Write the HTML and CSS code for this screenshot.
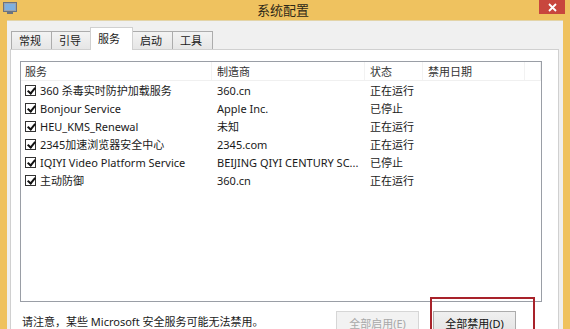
FILE: index.html
```html
<!DOCTYPE html>
<html lang="zh-CN">
  <head>
    <meta charset="UTF-8" />
    <title>系统配置</title>
    <link rel="stylesheet" href="styles.css">
  </head>
  <body>
    <div class="window">
      <div class="titlebar">
        <svg class="app-icon" width="14" height="12" viewBox="0 0 14 12">
          <rect x="0.5" y="0.5" width="13" height="9" fill="#9aa3ae" stroke="#6b7380" />
          <rect x="2" y="2" width="10" height="6" fill="#7fb0e0" />
          <rect x="4" y="10" width="6" height="2" fill="#6b7380" />
        </svg>
        <div class="title">系统配置</div>
        <button class="close-btn">
          <svg width="9" height="9" viewBox="0 0 9 9">
            <path d="M1 1 L8 8 M8 1 L1 8" stroke="#fff" stroke-width="1.8" />
          </svg>
        </button>
      </div>

      <div class="client">
        <div class="tabs">
          <div class="tab">常规</div>
          <div class="tab">引导</div>
          <div class="tab active">服务</div>
          <div class="tab">启动</div>
          <div class="tab">工具</div>
        </div>

        <div class="tab-page">
          <div class="listbox">
            <div class="list-row list-head">
              <div class="cell">服务</div>
              <div class="cell">制造商</div>
              <div class="cell">状态</div>
              <div class="cell">禁用日期</div>
              <div class="cell"></div>
            </div>

            <div class="list-row">
              <div class="cell"><span class="check"></span>360 杀毒实时防护加载服务</div>
              <div class="cell">360.cn</div>
              <div class="cell">正在运行</div>
              <div class="cell"></div>
              <div class="cell"></div>
            </div>
            <div class="list-row">
              <div class="cell"><span class="check"></span>Bonjour Service</div>
              <div class="cell">Apple Inc.</div>
              <div class="cell">已停止</div>
              <div class="cell"></div>
              <div class="cell"></div>
            </div>
            <div class="list-row">
              <div class="cell"><span class="check"></span>HEU_KMS_Renewal</div>
              <div class="cell">未知</div>
              <div class="cell">正在运行</div>
              <div class="cell"></div>
              <div class="cell"></div>
            </div>
            <div class="list-row">
              <div class="cell"><span class="check"></span>2345加速浏览器安全中心</div>
              <div class="cell">2345.com</div>
              <div class="cell">正在运行</div>
              <div class="cell"></div>
              <div class="cell"></div>
            </div>
            <div class="list-row">
              <div class="cell"><span class="check"></span>IQIYI Video Platform Service</div>
              <div class="cell">BEIJING QIYI CENTURY SC...</div>
              <div class="cell">已停止</div>
              <div class="cell"></div>
              <div class="cell"></div>
            </div>
            <div class="list-row">
              <div class="cell"><span class="check"></span>主动防御</div>
              <div class="cell">360.cn</div>
              <div class="cell">正在运行</div>
              <div class="cell"></div>
              <div class="cell"></div>
            </div>
          </div>

          <div class="footer">
            <p class="note">请注意，某些 Microsoft 安全服务可能无法禁用。</p>
            <div class="buttons">
              <button class="btn" disabled>全部启用(E)</button>
              <button class="btn">全部禁用(D)</button>
              <div class="highlight"></div>
            </div>
          </div>
        </div>
      </div>
    </div>
  </body>
</html>
```

FILE: styles.css
```css
:root {
  --frame-color: #efc25f;
  --client-bg: #f0f0f0;
  --border-gray: #acacac;
  --text-color: #1a1a1a;
  --font-family: "Noto Sans", "Noto Sans CJK SC", sans-serif;
}
* {
  box-sizing: border-box;
  margin: 0;
  padding: 0;
}
html,
body {
  width: 570px;
  height: 329px;
  overflow: hidden;
}
body {
  font-family: var(--font-family);
  font-size: 11px;
  color: var(--text-color);
  background: var(--frame-color);
}
.window {
  display: flex;
  flex-direction: column;
  height: 100%;
}
.titlebar {
  height: 22px;
  display: flex;
  align-items: flex-start;
  padding: 0 5px 0 3px;
}
.app-icon {
  margin-top: 2px;
  flex: none;
}
.title {
  flex: 1;
  text-align: center;
  font-family: "Noto Sans CJK SC", sans-serif;
  font-size: 13px;
  line-height: 20px;
  color: #2e2818;
  padding-left: 10px;
}
.close-btn {
  flex: none;
  width: 26px;
  height: 14px;
  border: none;
  background: #c8463d;
  display: flex;
  align-items: center;
  justify-content: center;
}
.client {
  flex: 1;
  margin: 0 7px;
  background: var(--client-bg);
  display: flex;
  flex-direction: column;
  border-top: 1px solid #e3d4a8;
}
.tabs {
  display: flex;
  align-items: flex-end;
  padding: 5px 0 0 4px;
  height: 28px;
  position: relative;
  z-index: 1;
}
.tab {
  height: 18px;
  padding: 0 10px 0 7px;
  line-height: 17px;
  font-family: "Noto Sans CJK SC", sans-serif;
  background: linear-gradient(#f3f3f3, #e6e6e6);
  border: 1px solid var(--border-gray);
  border-bottom: none;
  margin-right: -1px;
}
.tab.active {
  height: 23px;
  margin: 0 -1px -1px -1px;
  padding: 2px 12px 0 7px;
  background: #fff;
  border-color: #d0d0d0;
  position: relative;
}
.tab-page {
  flex: 1;
  margin: 0 4px 0 3px;
  background: #fff;
  border: 1px solid #d0d0d0;
  border-bottom: none;
  padding: 11px 16px 0 9px;
}
.listbox {
  height: 241px;
  border: 1px solid #9a9ea6;
  background: #fff;
}
.list-row {
  display: grid;
  grid-template-columns: 191px 153px 58px 102px 1fr;
  height: 18px;
  align-items: center;
  white-space: nowrap;
}
.list-head {
  height: 19px;
  border-bottom: 1px solid #f0f0f0;
  font-family: "Noto Sans CJK SC", sans-serif;
  color: #333;
}
.list-head .cell {
  height: 100%;
  line-height: 18px;
  border-right: 1px solid #f2f2f2;
}
.list-head .cell:first-child {
  padding-left: 6px;
}
.cell {
  padding-left: 5px;
  overflow: hidden;
  display: flex;
  align-items: center;
}
.list-row .cell:first-child {
  padding-left: 4px;
}
.check {
  width: 11px;
  height: 11px;
  margin-right: 4px;
  border: 1px solid #333;
  background: #fff;
  position: relative;
  flex: none;
}
.check::after {
  content: "";
  position: absolute;
  left: 3px;
  top: 0px;
  width: 3px;
  height: 6px;
  border: solid #111;
  border-width: 0 2px 2px 0;
  transform: rotate(40deg);
}
.footer {
  display: flex;
  justify-content: space-between;
  align-items: flex-start;
  padding: 9px 26px 0 2px;
}
.note {
  margin-top: 3px;
  font-size: 11px;
  line-height: 15px;
}
.buttons {
  display: flex;
  gap: 14px;
  position: relative;
}
.btn {
  width: 83px;
  height: 23px;
  font-family: var(--font-family);
  font-size: 11px;
  color: #111;
  background: linear-gradient(#f0f0f0, #e3e3e3);
  border: 1px solid var(--border-gray);
}
.btn:disabled {
  color: #a8a8a8;
  background: #f2f2f2;
  border-color: #d6d6d6;
}
.highlight {
  position: absolute;
  left: 94px;
  top: -14px;
  width: 105px;
  height: 40px;
  border: 2px solid #a8222a;
}
```
